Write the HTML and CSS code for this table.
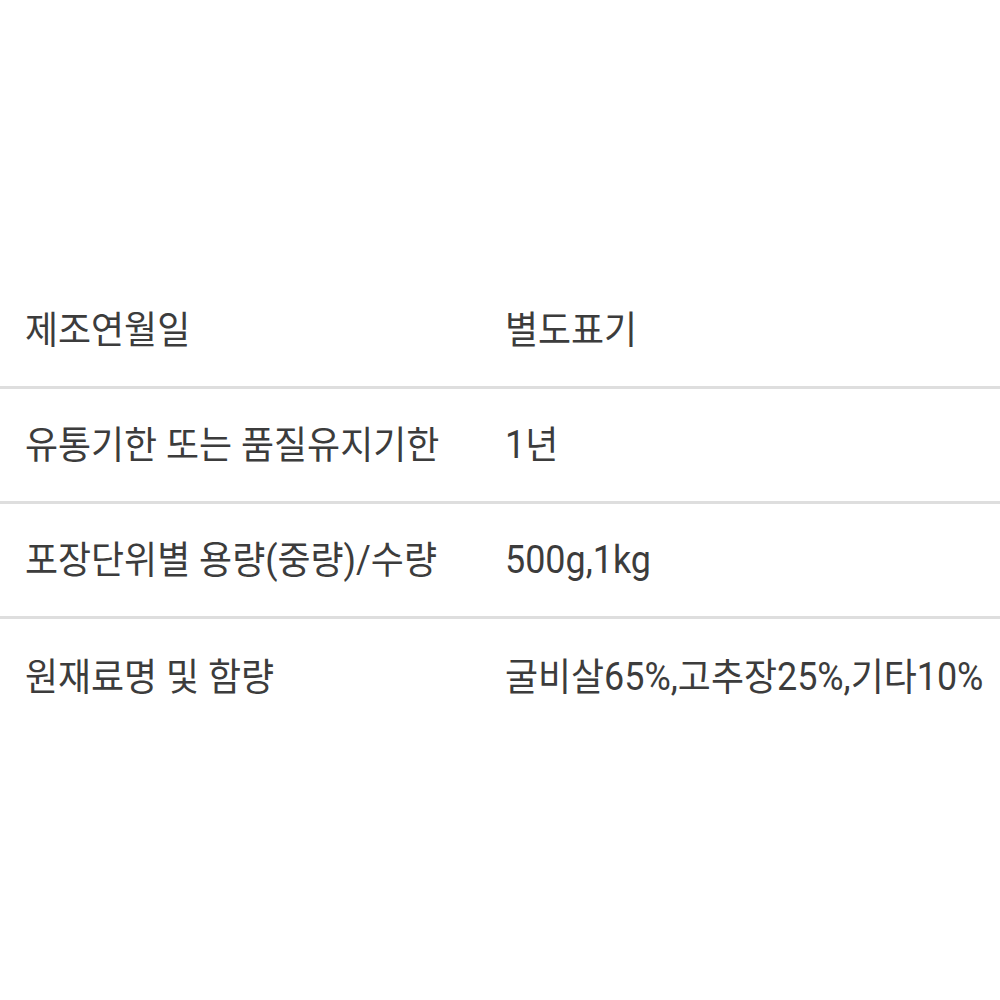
FILE: index.html
```html
<!DOCTYPE html>
<html lang="ko">
<head>
<meta charset="utf-8">
<link rel="stylesheet" href="styles.css">
</head>
<body>
<div class="page">
  <div class="table">
    <div class="row"><div class="cell key"><span class="txt">제조연월일</span></div><div class="cell val"><span class="txt">별도표기</span></div></div>
    <div class="row"><div class="cell key"><span class="txt">유통기한 또는 품질유지기한</span></div><div class="cell val"><span class="txt">1년</span></div></div>
    <div class="row"><div class="cell key"><span class="txt">포장단위별 용량(중량)/수량</span></div><div class="cell val"><span class="txt">500g,1kg</span></div></div>
    <div class="row last"><div class="cell key"><span class="txt">원재료명 및 함량</span></div><div class="cell val"><span class="txt">굴비살65%,고추장25%,기타10%</span></div></div>
  </div>
</div>
</body>
</html>
```
FILE: styles.css
```css
html, body { margin: 0; padding: 0; background: #fff; }
.page {
  width: 1000px;
  height: 1000px;
  padding-top: 274px;
  box-sizing: border-box;
  font-family: Roboto, "Noto Sans CJK KR", "Noto Sans", sans-serif;
  color: #3c3c3c;
}
.row {
  display: grid;
  grid-template-columns: 480px 520px;
  height: 115px;
  align-items: center;
  border-bottom: 3px solid #dedede;
  box-sizing: border-box;
}
.row.last { border-bottom: none; }
.cell {
  font-size: 38px;
  line-height: 1;
  padding-left: 25px;
  white-space: nowrap;
}
.txt {
  display: inline-block;
  transform: scaleX(0.945);
  transform-origin: left center;
}
```
